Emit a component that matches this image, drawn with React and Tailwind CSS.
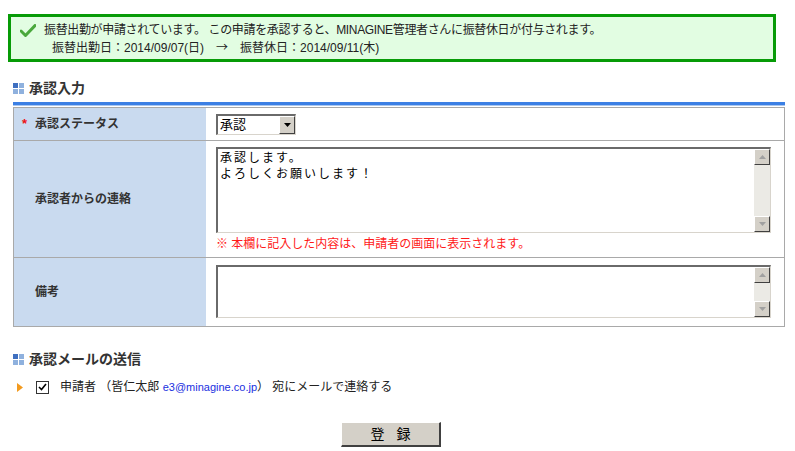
import React from "react";

const font = "font-['Liberation_Sans','Noto_Sans_CJK_JP',sans-serif]";

function HeadIcon() {
  return (
    <svg width="11" height="11" viewBox="0 0 11 11" className="shrink-0">
      <rect x="0" y="0" width="5" height="5" fill="#3e6fc0" />
      <rect x="6" y="0" width="5" height="5" fill="#8fb1de" />
      <rect x="0" y="6" width="5" height="5" fill="#8fb1de" />
      <rect x="6" y="6" width="5" height="5" fill="#8fb1de" />
    </svg>
  );
}

function ScrollBtn({ up }) {
  return (
    <div className="w-[16px] h-[16px] bg-[#d4d0c8] border-t border-l border-t-white border-l-white border-b border-r border-b-[#404040] border-r-[#404040] flex items-center justify-center">
      <svg width="7" height="4" viewBox="0 0 7 4">
        {up ? (
          <polygon points="0,4 7,4 3.5,0" fill="#a0a0a0" />
        ) : (
          <polygon points="0,0 7,0 3.5,4" fill="#a0a0a0" />
        )}
      </svg>
    </div>
  );
}

function FakeTextarea({ height, lines }) {
  return (
    <div
      className="w-[555px] flex border-t-2 border-l-2 border-t-[#6a6a6a] border-l-[#6a6a6a] border-b border-r border-b-[#d8d4cc] border-r-[#d8d4cc] bg-white"
      style={{ height }}
    >
      <div className="flex-1 pl-[2px] text-[12px] leading-[16px] text-black font-['Noto_Sans_CJK_JP',sans-serif] tracking-[2px]">
        {lines.map((l, i) => (
          <div key={i}>{l}</div>
        ))}
      </div>
      <div className="w-[16px] flex flex-col bg-[#ebeae5]">
        <ScrollBtn up />
        <div className="flex-1" />
        <ScrollBtn />
      </div>
    </div>
  );
}

export default function App() {
  return (
    <div className={`w-[795px] h-[451px] bg-white text-[12px] text-[#222] ${font}`}>
      <div className="pt-[14px]">
        <div className="ml-[8px] w-[768px] h-[48px] border-[3px] border-[#079b07] bg-[#e2fde2] pt-[5px]">
          <div className="flex items-center h-[16px] leading-[16px]">
            <svg width="16" height="13" viewBox="0 0 16 13" className="ml-[9px] mr-[8px]">
              <path d="M1 7 L5.5 11.5 L15 1.5" stroke="#4aa83c" strokeWidth="3" fill="none" strokeLinejoin="round" strokeLinecap="round" />
            </svg>
            <span className="tracking-[-0.35px]">振替出勤が申請されています。 この申請を承認すると、MINAGINE管理者さんに振替休日が付与されます。</span>
          </div>
          <div className="h-[16px] leading-[16px] mt-[1px] pl-[41px]">
            振替出勤日：2014/09/07(日)　<span className="font-['Noto_Sans_CJK_JP',sans-serif]">→</span>　振替休日：2014/09/11(木)
          </div>
        </div>
      </div>

      <div className="mt-[16px] ml-[13px] h-[20px] flex items-center gap-[5px]">
        <HeadIcon />
        <span className="text-[14px] font-bold text-[#333]">承認入力</span>
      </div>

      <div className="ml-[13px] w-[772px] mt-[4px]">
        <div className="h-[3px] bg-[#3b7fe4]" />
        <div className="h-[1px] bg-[#a8c6f0]" />
        <div className="mt-[1px] border border-[#a9a9a9]">
          <div className="grid grid-cols-[192px_1fr] h-[33px] border-b border-[#a9a9a9]">
            <div className="bg-[#c9daef] flex items-center pl-[8px] font-bold text-[#333]">
              <span className="text-[#ee1111] w-[13px] text-[13px]">*</span>
              <span>承認ステータス</span>
            </div>
            <div className="flex items-center pl-[10px]">
              <div className="w-[80px] h-[21px] flex border-t-2 border-l-2 border-t-[#6a6a6a] border-l-[#6a6a6a] border-b border-r border-b-[#d8d4cc] border-r-[#d8d4cc] bg-white">
                <div className="flex-1 pl-[2px] leading-[18px] text-[13px] text-black">承認</div>
                <div className="w-[16px] h-[18px] bg-[#d4d0c8] border-t border-l border-t-white border-l-white border-b border-r border-b-[#404040] border-r-[#404040] flex items-center justify-center">
                  <svg width="7" height="4" viewBox="0 0 7 4">
                    <polygon points="0,0 7,0 3.5,4" fill="#000" />
                  </svg>
                </div>
              </div>
            </div>
          </div>

          <div className="grid grid-cols-[192px_1fr] h-[117px] border-b border-[#a9a9a9]">
            <div className="bg-[#c9daef] flex items-center pl-[21px] font-bold text-[#333]">承認者からの連絡</div>
            <div className="pl-[10px] pt-[6px]">
              <FakeTextarea height={86} lines={["承認します。", "よろしくお願いします！"]} />
              <div className="text-[#ff1a1a] mt-[3px] leading-[16px]">※ 本欄に記入した内容は、申請者の画面に表示されます。</div>
            </div>
          </div>

          <div className="grid grid-cols-[192px_1fr] h-[68px]">
            <div className="bg-[#c9daef] flex items-center pl-[21px] font-bold text-[#333]">備考</div>
            <div className="pl-[10px] pt-[7px]">
              <FakeTextarea height={53} lines={[]} />
            </div>
          </div>
        </div>
      </div>

      <div className="mt-[22px] ml-[13px] h-[20px] flex items-center gap-[5px]">
        <HeadIcon />
        <span className="text-[14px] font-bold text-[#333]">承認メールの送信</span>
      </div>

      <div className="mt-[10px] h-[16px] flex items-center">
        <svg width="6" height="9" viewBox="0 0 6 9" className="ml-[17px]">
          <polygon points="0,0 6,4.5 0,9" fill="#f39a1e" />
        </svg>
        <div className="ml-[13px] w-[13px] h-[13px] border border-[#333] bg-white flex items-center justify-center">
          <svg width="9" height="8" viewBox="0 0 9 8">
            <path d="M1 4 L3.5 6.5 L8 1" stroke="#000" strokeWidth="1.6" fill="none" />
          </svg>
        </div>
        <span className="ml-[11px]">
          申請者 （皆仁太郎 <span className="text-[11px] text-[#1a2fe0]">e3@minagine.co.jp</span>） 宛にメールで連絡する
        </span>
      </div>

      <div className="mt-[27px] ml-[341px] w-[100px] h-[25px] bg-[#d4d0c8] border-t border-l border-t-white border-l-white border-b-2 border-r-2 border-b-[#404040] border-r-[#404040] flex items-center justify-center gap-[12px] text-[14px] text-black">
        <span>登</span>
        <span>録</span>
      </div>
    </div>
  );
}
